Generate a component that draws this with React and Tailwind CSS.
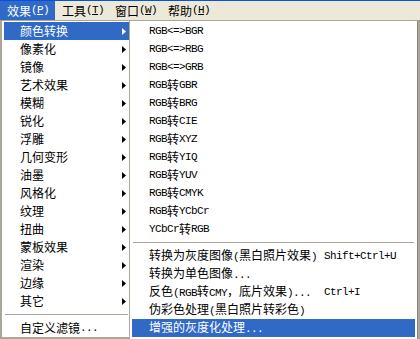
import React from 'react'

const cjk = "font-['Noto_Sans_CJK_SC','Noto_Sans_CJK_TC',sans-serif]"
const mono = "font-['Liberation_Mono',monospace] text-[11px] tracking-[-0.6px]"

// split ascii runs so latin gets the narrow 6px mono look of the old bitmap font
function Txt({ s }) {
  return s
    .split(/([\x20-\x7e]+)/)
    .filter(Boolean)
    .map((p, i) =>
      /^[\x20-\x7e]+$/.test(p) ? (
        <span key={i} className={mono}>{p}</span>
      ) : (
        <span key={i}>{p}</span>
      )
    )
}

function Arrow({ white }) {
  return (
    <svg width="4" height="7" viewBox="0 0 4 7" className="shrink-0">
      <path d="M0 0L4 3.5L0 7Z" fill={white ? '#ffffff' : '#000000'} />
    </svg>
  )
}

const mainItems = [
  '颜色转换', '像素化', '镜像', '艺术效果', '模糊', '锐化', '浮雕', '几何变形',
  '油墨', '风格化', '纹理', '扭曲', '蒙板效果', '渲染', '边缘', '其它',
]

const subItems = [
  'RGB<=>BGR', 'RGB<=>RBG', 'RGB<=>GRB', 'RGB转GBR', 'RGB转BRG', 'RGB转CIE',
  'RGB转XYZ', 'RGB转YIQ', 'RGB转YUV', 'RGB转CMYK', 'RGB转YCbCr', 'YCbCr转RGB',
]

const grayItems = [
  { label: '转换为灰度图像(黑白照片效果)', key: 'Shift+Ctrl+U' },
  { label: '转换为单色图像...' },
  { label: '反色(RGB转CMY，底片效果)...', key: 'Ctrl+I' },
  { label: '伪彩色处理(黑白照片转彩色)' },
  { label: '增强的灰度化处理...', active: true },
]

const bar = [
  { t: '效果', k: 'P', active: true },
  { t: '工具', k: 'T' },
  { t: '窗口', k: 'W' },
  { t: '帮助', k: 'H' },
]

function Sep() {
  return (
    <div className="h-[9px] flex items-center px-[1px]">
      <div className="h-px w-full bg-[#ACA899]" />
    </div>
  )
}

export default function App() {
  return (
    <div className={`relative w-[420px] h-[339px] overflow-hidden bg-[#A8A496] text-[12px] text-black ${cjk}`}>
      <div className="h-px bg-[#0A50E0]" />
      <div className="h-[19px] bg-[#ECE9D8] flex items-stretch">
        {bar.map((b) => (
          <div
            key={b.t}
            className={`flex shrink-0 items-center h-full whitespace-nowrap leading-[19px] ${
              b.active ? 'bg-[#316AC5] text-white pl-[7px] w-[55px]' : 'pl-[7px] w-[53px]'
            }`}
          >
            <span className="shrink-0">{b.t}</span>
            <span className={`shrink-0 ${mono}`}>
              (<u>{b.k}</u>)
            </span>
          </div>
        ))}
      </div>
      <div className="h-full bg-[#A8A496]" />

      {/* main menu */}
      <div className="absolute left-[1px] top-[20px] w-[131px] bg-white border border-[#ACA899] pt-[1px] px-[2px]">
        {mainItems.map((m, i) => (
          <div
            key={m}
            className={`h-[18px] flex items-center justify-between pl-[16px] pr-[3px] leading-[18px] ${
              i === 0 ? 'bg-[#316AC5] text-white' : ''
            }`}
          >
            <span>{m}</span>
            <Arrow white={i === 0} />
          </div>
        ))}
        <Sep />
        <div className="h-[18px] flex items-center pl-[16px] leading-[18px]">
          <Txt s="自定义滤镜..." />
        </div>
      </div>

      {/* color conversion submenu */}
      <div className="absolute left-[129px] top-[20px] w-[289px] h-[330px] bg-white border border-[#ACA899] border-r-[#8C8A80] pt-[1px] px-[2px]">
        {subItems.map((s) => (
          <div key={s} className="h-[18px] flex items-center pl-[17px] leading-[18px]">
            <Txt s={s} />
          </div>
        ))}
        <Sep />
        {grayItems.map((g) => (
          <div
            key={g.label}
            className={`h-[18px] flex items-center pl-[17px] leading-[18px] ${
              g.active ? 'bg-[#316AC5] text-white' : ''
            }`}
          >
            <span className="w-[175px] shrink-0 whitespace-nowrap">
              <Txt s={g.label} />
            </span>
            {g.key && <span className={mono}>{g.key}</span>}
          </div>
        ))}
      </div>
    </div>
  )
}
